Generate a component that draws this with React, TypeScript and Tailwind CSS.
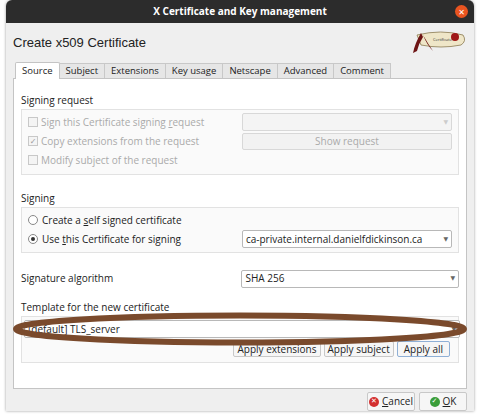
import React from "react";

const F = { fontFamily: '"Open Sans","DejaVu Sans",sans-serif' };

function Check({ checked }: { checked?: boolean }) {
  return (
    <span className="w-[10px] h-[10px] border border-[#c8c8c8] bg-[#f4f4f4] inline-flex items-center justify-center text-[8px] leading-none text-[#999]">
      {checked ? "✓" : ""}
    </span>
  );
}
function Radio({ on }: { on?: boolean }) {
  return (
    <span className="w-[10px] h-[10px] rounded-full border border-[#888] bg-white inline-flex items-center justify-center">
      {on && <span className="w-[4px] h-[4px] rounded-full bg-[#333]" />}
    </span>
  );
}
function Combo({ text, disabled, w }: { text: string; disabled?: boolean; w: string }) {
  return (
    <div className={`${w} h-[18px] border ${disabled ? "border-[#d8d8d8] bg-[#f4f4f4]" : "border-[#b8b8b8] bg-white"} rounded-[2px] flex items-center px-[3px] text-[10px] text-[#222]`}>
      <span className="flex-1">{text}</span>
      <span className={`text-[6px] ${disabled ? "text-[#ccc]" : "text-[#666]"}`}>▼</span>
    </div>
  );
}

export default function App() {
  return (
    <div className="w-[480px] h-[417px] bg-white relative" style={F}>
      <div className="absolute left-[6px] top-0 w-[468px] h-[411px] bg-[#efefef] rounded-t-[6px] overflow-hidden shadow-[0_0_3px_rgba(0,0,0,0.4)] flex flex-col">
        <div className="h-[23px] bg-[#2c2c2c] flex items-center justify-center relative text-white text-[10px] font-bold">
          X Certificate and Key management
          <span className="absolute right-[6px] top-[5px] w-[13px] h-[13px] rounded-full bg-[#e95420] flex items-center justify-center text-[8px] text-white">✕</span>
        </div>
        <div className="flex items-center justify-between px-[7px] h-[38px]">
          <span className="text-[13px] text-[#222] pt-[1px]" style={{ fontFamily: '"Liberation Sans",sans-serif' }}>Create x509 Certificate</span>
          <svg width="56" height="26" viewBox="0 0 56 26">
            <path d="M6 6 Q30 0 52 6 Q56 12 50 16 Q30 20 10 16 Z" fill="#efe6c8" stroke="#8a7a50" strokeWidth="0.8" />
            <path d="M10 4 Q4 14 2 24 L6 22 Q8 14 12 8 Z" fill="#6e1515" />
            <path d="M12 6 Q16 16 22 22 L18 16 Z" fill="#6e1515" />
            <circle cx="44" cy="8" r="4" fill="#a01818" />
            <text x="22" y="12" fontSize="4" fill="#333">Certificate</text>
          </svg>
        </div>
        <div className="px-[7px]">
          <div className="flex text-[9.5px] text-[#222] h-[17px] items-end">
            {["Source", "Subject", "Extensions", "Key usage", "Netscape", "Advanced", "Comment"].map((t, i) => (
              <div
                key={t}
                className={
                  i === 0
                    ? "h-[17px] px-[6px] bg-white border border-b-0 border-[#c4c4c4] rounded-t-[2px] flex items-center ml-[2px] relative top-[1px]"
                    : "h-[15px] px-[6px] bg-[#e6e6e6] border border-b-0 border-l-0 border-[#c8c8c8] flex items-center"
                }
              >
                {t}
              </div>
            ))}
          </div>
          <div className="h-[311px] bg-white border border-[#c4c4c4] px-[7px] text-[10px] text-[#222]">
            <div className="mt-[14px] mb-[2px] leading-[14px]">Signing request</div>
            <div className="border border-[#e2e2e2] bg-[#fafafa] h-[66px] px-[6px] pt-[3px] text-[#aaa] flex flex-col gap-[1px]">
              <div className="flex items-center h-[18px]">
                <div className="flex items-center gap-[3px] w-[216px]"><Check /> <span>Sign this Certificate signing <u>r</u>equest</span></div>
                <Combo text="" disabled w="w-[212px]" />
              </div>
              <div className="flex items-center h-[18px]">
                <div className="flex items-center gap-[3px] w-[216px]"><Check checked /> <span>Copy extensions from the request</span></div>
                <div className="w-[212px] h-[17px] border border-[#d8d8d8] bg-[#f2f2f2] rounded-[2px] flex items-center justify-center">Show request</div>
              </div>
              <div className="flex items-center h-[18px] gap-[3px]"><Check /> <span>Modify subject of the request</span></div>
            </div>
            <div className="mt-[16px] mb-[2px] leading-[14px]">Signing</div>
            <div className="border border-[#e2e2e2] bg-[#fafafa] h-[46px] px-[6px] pt-[3px] flex flex-col">
              <div className="flex items-center gap-[4px] h-[18px]"><Radio /> <span>Create a <u>s</u>elf signed certificate</span></div>
              <div className="flex items-center h-[20px]">
                <div className="flex items-center gap-[4px] w-[216px]"><Radio on /> <span>Use <u>t</u>his Certificate for signing</span></div>
                <Combo text="ca-private.internal.danielfdickinson.ca" w="w-[212px]" />
              </div>
            </div>
            <div className="flex items-center mt-[16px] h-[19px]">
              <span className="w-[222px]">Signature algorithm</span>
              <Combo text="SHA 256" w="w-[219px]" />
            </div>
            <div className="mt-[12px] mb-[2px] leading-[14px]">Template for the new certificate</div>
            <div className="border border-[#e2e2e2] bg-[#fafafa] h-[47px] px-[2px] pt-[3px] relative">
              <Combo text="[default] TLS_server" w="w-[436px]" />
              <div className="flex justify-end gap-[3px] mt-[3px] mr-[6px]">
                <div className="h-[16px] px-[3px] border border-[#c8c8c8] bg-[#f6f6f6] rounded-[2px] flex items-center">Apply extensions</div>
                <div className="h-[16px] px-[3px] border border-[#c8c8c8] bg-[#f6f6f6] rounded-[2px] flex items-center">Apply subject</div>
                <div className="h-[16px] px-[6px] border border-[#8fb0d6] bg-[#f6f6f6] rounded-[2px] flex items-center">Apply all</div>
              </div>
              <svg className="absolute left-[-10px] top-[-5px]" width="456" height="34" viewBox="0 0 456 34">
                <ellipse cx="228" cy="17" rx="224" ry="13.5" fill="none" stroke="#7a4a2c" strokeWidth="6" />
              </svg>
            </div>
          </div>
          <div className="flex justify-end gap-[4px] mt-[3px] text-[10px] text-[#222]">
            <div className="h-[19px] w-[48px] border border-[#c8c8c8] bg-[#f6f6f6] rounded-[2px] flex items-center justify-center gap-[3px]">
              <span className="w-[10px] h-[10px] rounded-full bg-[#d32f2f] text-white text-[7px] flex items-center justify-center">✕</span><span><u>C</u>ancel</span>
            </div>
            <div className="h-[19px] w-[48px] border border-[#c8c8c8] bg-[#f6f6f6] rounded-[2px] flex items-center justify-center gap-[3px]">
              <span className="w-[10px] h-[10px] rounded-full bg-[#3a9d3a] text-white text-[7px] flex items-center justify-center">✓</span><span><u>O</u>K</span>
            </div>
          </div>
        </div>
      </div>
    </div>
  );
}
